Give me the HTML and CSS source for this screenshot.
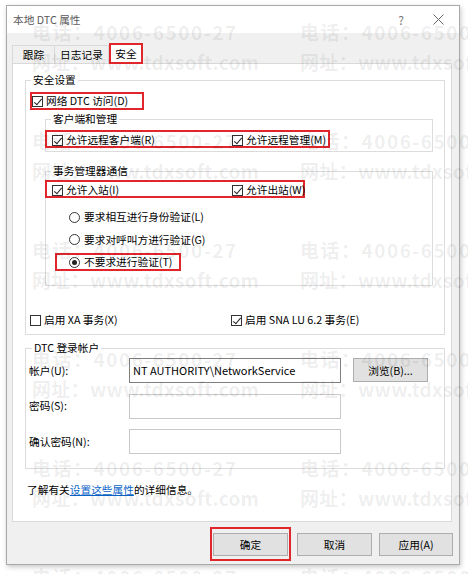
FILE: index.html
```html
<!DOCTYPE html>
<html lang="zh-CN">
<head>
    <meta charset="UTF-8">
    <title>本地 DTC 属性</title>
    <link rel="stylesheet" href="styles.css">
</head>
<body>
    <div class="window">
        <div class="titlebar">
            <span class="title">本地 DTC 属性</span>
            <span class="help">?</span>
            <span class="close">
                <svg width="11" height="11" viewBox="0 0 11 11"><path d="M0.5 0.5 L10.5 10.5 M10.5 0.5 L0.5 10.5" stroke="#666" stroke-width="1" fill="none"/></svg>
            </span>
        </div>

        <div class="client">
            <div class="tabs">
                <div class="tab tab-trace">跟踪</div>
                <div class="tab tab-log">日志记录</div>
                <div class="tab tab-security active mark">安全</div>
            </div>

            <div class="panel">
                <fieldset class="group group-security">
                    <legend>安全设置</legend>
                    <label class="opt opt-network mark"><span class="box checked"></span>网络 DTC 访问(D)</label>

                    <fieldset class="group sub sub-client">
                        <legend>客户端和管理</legend>
                        <div class="pair pair-remote mark">
                            <label class="opt"><span class="box checked"></span>允许远程客户端(R)</label>
                            <label class="opt"><span class="box checked"></span>允许远程管理(M)</label>
                        </div>
                    </fieldset>

                    <fieldset class="group sub sub-tm">
                        <legend>事务管理器通信</legend>
                        <div class="pair pair-inout mark">
                            <label class="opt"><span class="box checked"></span>允许入站(I)</label>
                            <label class="opt"><span class="box checked"></span>允许出站(W)</label>
                        </div>
                        <label class="opt radio-row first"><span class="radio"></span>要求相互进行身份验证(L)</label>
                        <label class="opt radio-row"><span class="radio"></span>要求对呼叫方进行验证(G)</label>
                        <label class="opt radio-row mark"><span class="radio selected"></span>不要求进行验证(T)</label>
                    </fieldset>

                    <div class="pair pair-xa">
                        <label class="opt"><span class="box"></span>启用 XA 事务(X)</label>
                        <label class="opt"><span class="box checked"></span>启用 SNA LU 6.2 事务(E)</label>
                    </div>
                </fieldset>

                <fieldset class="group group-account">
                    <legend>DTC 登录帐户</legend>
                    <div class="account-form">
                        <span class="field-label">帐户(U):</span>
                        <div class="input active-input">NT AUTHORITY\NetworkService</div>
                        <button class="btn">浏览(B)...</button>

                        <span class="field-label">密码(S):</span>
                        <div class="input"></div>
                        <span></span>

                        <span class="field-label">确认密码(N):</span>
                        <div class="input"></div>
                        <span></span>
                    </div>
                </fieldset>

                <p class="info">了解有关<a href="#">设置这些属性</a>的详细信息。</p>
            </div>

            <div class="buttons">
                <div class="btn-wrap mark"><button class="btn">确定</button></div>
                <button class="btn">取消</button>
                <button class="btn">应用(A)</button>
            </div>
        </div>
    </div>

    <div class="watermark">
        <div class="wm"><span>电话：4006-6500-27</span><span class="url">网址：www.tdxsoft.com</span></div>
        <div class="wm"><span>电话：4006-6500-27</span><span class="url">网址：www.tdxsoft.com</span></div>
        <div class="wm"><span>电话：4006-6500-27</span><span class="url">网址：www.tdxsoft.com</span></div>
        <div class="wm"><span>电话：4006-6500-27</span><span class="url">网址：www.tdxsoft.com</span></div>
        <div class="wm"><span>电话：4006-6500-27</span><span class="url">网址：www.tdxsoft.com</span></div>
        <div class="wm"><span>电话：4006-6500-27</span><span class="url">网址：www.tdxsoft.com</span></div>
        <div class="wm"><span>电话：4006-6500-27</span><span class="url">网址：www.tdxsoft.com</span></div>
        <div class="wm"><span>电话：4006-6500-27</span><span class="url">网址：www.tdxsoft.com</span></div>
        <div class="wm"><span>电话：4006-6500-27</span><span class="url">网址：www.tdxsoft.com</span></div>
        <div class="wm"><span>电话：4006-6500-27</span><span class="url">网址：www.tdxsoft.com</span></div>
        <div class="wm"><span>电话：4006-6500-27</span><span class="url">网址：www.tdxsoft.com</span></div>
        <div class="wm"><span>电话：4006-6500-27</span><span class="url">网址：www.tdxsoft.com</span></div>
    </div>
</body>
</html>
```

FILE: styles.css
```css
* {
    margin: 0;
    box-sizing: border-box;
}

body {
    position: relative;
    width: 468px;
    height: 574px;
    padding: 5px 0 0 6px;
    overflow: hidden;
    background-color: #fff;
    font-family: "Noto Sans CJK SC", "Microsoft YaHei", sans-serif;
    font-size: 10.7px;
    line-height: 16px;
    color: #000;
}

/* dialog frame */
.window {
    width: 454px;
    height: 560px;
    display: flex;
    flex-direction: column;
    background-color: #f0f0f0;
    border: 1px solid #a9a9a9;
    box-shadow: 1px 2px 5px rgba(0, 0, 0, 0.22);
}

.titlebar {
    height: 27px;
    display: flex;
    align-items: center;
    padding-left: 6px;
    background-color: #fff;
    color: #5a5a5a;
}

.help {
    margin-left: auto;
    font-size: 12px;
    color: #777;
}

.close {
    display: flex;
    margin: 0 15px 0 29px;
}

.client {
    flex: 1;
    padding: 9px 6px 0 5px;
}

/* tabs */
.tabs {
    height: 21px;
    display: flex;
    align-items: flex-end;
}

.tab {
    height: 18px;
    display: flex;
    align-items: center;
    justify-content: center;
    border: 1px solid #d9d9d9;
    border-bottom: none;
    background-color: #f0f0f0;
}

.tab-trace { width: 43px; }
.tab-log { width: 54px; border-left: none; }

.tab-security {
    width: 34px;
    height: 21px;
    background-color: #fff;
    position: relative;
    z-index: 1;
    margin-bottom: -1px;
}

.mark {
    border: 2px solid #e0262b !important;
}

.panel {
    height: 459px;
    margin-right: 1px;
    padding: 0 6px 0 12px;
    background-color: #fff;
    border: 1px solid #d9d9d9;
}

/* group boxes */
.group {
    border: 1px solid #dcdcdc;
    padding: 0;
    min-width: 0;
}

.group legend {
    margin-left: 5px;
    padding: 0 2px;
    line-height: 16px;
}

.group-security {
    margin-top: 8px;
    padding-bottom: 5px;
}

.sub {
    margin: 1px 11px 0 19px;
}

.sub-tm {
    margin-top: 11px;
    padding-bottom: 14px;
}

.sub-client {
    padding-bottom: 3px;
}

/* check boxes and radio buttons */
.opt {
    height: 18px;
    display: inline-flex;
    align-items: center;
    gap: 3px;
    border: 2px solid transparent;
    white-space: nowrap;
}

.box {
    width: 11px;
    height: 11px;
    flex: none;
    position: relative;
    border: 1px solid #333;
    background-color: #fff;
}

.box.checked::after {
    content: "";
    position: absolute;
    left: 3px;
    top: 0;
    width: 3px;
    height: 7px;
    border-right: 1px solid #222;
    border-bottom: 1px solid #222;
    transform: rotate(40deg);
}

.radio {
    width: 11px;
    height: 11px;
    flex: none;
    margin-right: 1px;
    border: 1px solid #333;
    border-radius: 50%;
    display: flex;
    align-items: center;
    justify-content: center;
}

.radio.selected::after {
    content: "";
    width: 5px;
    height: 5px;
    border-radius: 50%;
    background-color: #222;
}

.opt-network {
    display: flex;
    width: 114px;
    margin: 4px 0 0 4px;
}

.pair {
    display: grid;
    align-items: center;
    height: 18px;
}

.pair .opt {
    border: none;
    height: auto;
}

.pair-remote {
    width: 285px;
    margin: 3px 0 0 -1px;
    padding-left: 5px;
    grid-template-columns: 180px auto;
}

.pair-inout {
    width: 260px;
    margin: 1px 0 0 -1px;
    padding-left: 5px;
    grid-template-columns: 180px auto;
}

.radio-row {
    display: flex;
    width: 126px;
    margin: 4.5px 0 0 9px;
    padding-left: 12px;
}

.radio-row.first {
    margin-top: 10px;
    width: 200px;
}

.pair-xa {
    margin: 25px 0 0 4px;
    grid-template-columns: 201px auto;
}

/* login account */
.group-account {
    margin-top: 5px;
    padding-bottom: 14px;
}

.group-account legend {
    margin-left: 6px;
}

.account-form {
    display: grid;
    grid-template-columns: 88px 212px 75px;
    grid-auto-rows: 25px;
    column-gap: 12px;
    row-gap: 10.5px;
    align-items: center;
    margin: 2px 0 0 3px;
}

.input {
    height: 25px;
    padding: 3px 0 0 3px;
    border: 1px solid #c9c9c9;
    background-color: #fff;
    font-size: 11px;
}

.active-input {
    border-color: #7f7f7f;
}

.btn {
    height: 23px;
    border: 1px solid #adadad;
    background-color: #e1e1e1;
    font-family: inherit;
    font-size: 10.7px;
    color: #000;
    padding: 0;
}

.account-form .btn {
    height: 24px;
    align-self: start;
}

.info {
    margin: 13px 0 0 2px;
}

.info a {
    color: #0a64c8;
    text-decoration: underline;
}

/* dialog buttons */
.buttons {
    display: flex;
    justify-content: flex-end;
    align-items: flex-start;
    gap: 7px;
    margin-top: 5px;
}

.buttons > .btn {
    width: 75px;
    margin-top: 6px;
}

.buttons > .btn:last-child {
    width: 74px;
}

.btn-wrap {
    padding: 4px 1px 3px;
    margin-right: -1px;
}

.btn-wrap .btn {
    width: 75px;
    display: block;
}

/* watermark overlay */
.watermark {
    position: absolute;
    top: 0;
    left: 0;
    width: 468px;
    height: 574px;
    padding: 17px 0 0 32px;
    display: grid;
    grid-template-columns: 268px 200px;
    grid-auto-rows: 109px;
    pointer-events: none;
    overflow: hidden;
}

.wm {
    display: flex;
    flex-direction: column;
    white-space: nowrap;
    font-family: "Noto Sans CJK SC", sans-serif;
    font-size: 19px;
    font-weight: 700;
    line-height: 30px;
    letter-spacing: 1.5px;
    color: rgba(0, 0, 0, 0.08);
}

.wm .url {
    letter-spacing: 0.3px;
}
```
